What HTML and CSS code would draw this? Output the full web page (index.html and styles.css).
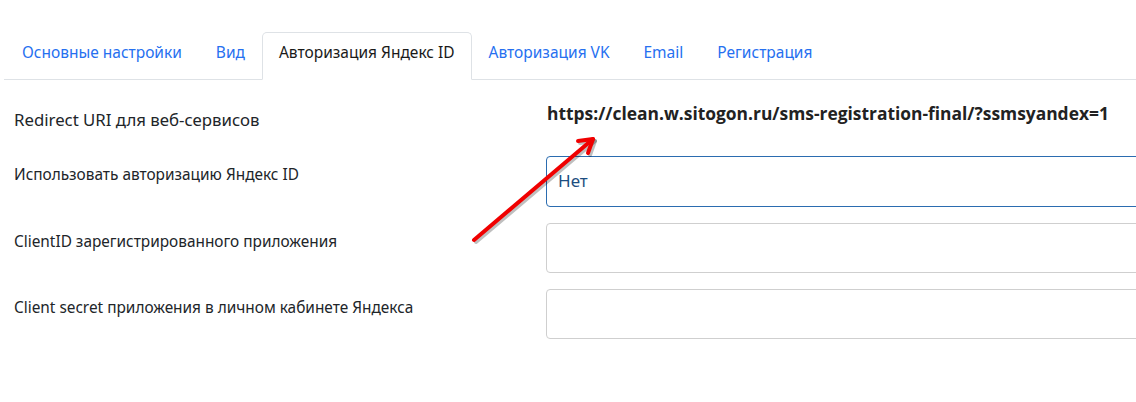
FILE: index.html
```html
<!DOCTYPE html>
<html lang="ru">
<head>
    <meta charset="UTF-8">
    <title>Настройки</title>
    <link rel="stylesheet" href="styles.css">
</head>
<body>
    <div class="abas">
        <ul class="nav">
            <li><a class="nav-link" href="#">Основные настройки</a></li>
            <li><a class="nav-link" href="#">Вид</a></li>
            <li><a class="nav-link ativo" href="#">Авторизация Яндекс ID</a></li>
            <li><a class="nav-link" href="#">Авторизация VK</a></li>
            <li><a class="nav-link" href="#">Email</a></li>
            <li><a class="nav-link" href="#">Регистрация</a></li>
        </ul>
    </div>

    <div class="formulario">
        <div class="linha linha-uri">
            <div class="rotulo rotulo-grande">Redirect URI для веб-сервисов</div>
            <div class="campo"><span class="url">https://clean.w.sitogon.ru/sms-registration-final/?ssmsyandex=1</span></div>
        </div>
        <div class="linha">
            <div class="rotulo">Использовать авторизацию Яндекс ID</div>
            <div class="campo">
                <div class="caixa caixa-foco">Нет</div>
            </div>
        </div>
        <div class="linha">
            <div class="rotulo">ClientID зарегистрированного приложения</div>
            <div class="campo"><div class="caixa"></div></div>
        </div>
        <div class="linha">
            <div class="rotulo">Client secret приложения в личном кабинете Яндекса</div>
            <div class="campo"><div class="caixa"></div></div>
        </div>

        <!-- seta vermelha por cima -->
        <svg class="seta" width="160" height="130" viewBox="460 120 160 130">
            <g fill="none" stroke-linecap="round" stroke-linejoin="round">
                <g stroke="rgba(0,0,0,0.25)" stroke-width="4" transform="translate(2,2)">
                    <path d="M474 240 L593 139"/>
                    <path d="M578 141 L593 139 L588 153"/>
                </g>
                <g stroke="#f00000" stroke-width="4">
                    <path d="M474 240 L593 139"/>
                    <path d="M578 141 L593 139 L588 153"/>
                </g>
            </g>
        </svg>
    </div>
</body>
</html>
```

FILE: styles.css
```css
*{
    margin: 0;
    padding: 0;
    box-sizing: border-box;
}
body{
    background-color: #fff;
    font-family: "Noto Sans", "Open Sans", sans-serif;
    color: #212529;
    overflow: hidden;
    width: 1136px;
    height: 402px;
}
.abas{
    padding-top: 32px;
    padding-left: 4px;
}
.nav{
    list-style: none;
    display: flex;
    padding-left: 1px;
    border-bottom: 1px solid #dee2e6;
}
.nav-link{
    display: block;
    padding: 7px 16px 15px 16px;
    font-size: 15.5px;
    line-height: 24px;
    color: #2670f0;
    text-decoration: none;
    border: 1px solid transparent;
    border-radius: 5px 5px 0 0;
    margin-bottom: -1px;
}
.nav-link.ativo{
    color: #1a1a1a;
    background-color: #fff;
    border-color: #dee2e6 #dee2e6 #fff;
}
.formulario{
    position: relative;
}
.linha{
    display: flex;
    padding-left: 14px;
    margin-bottom: 16px;
}
.rotulo{
    width: 532px;
    flex-shrink: 0;
    font-size: 15.4px;
    line-height: 22px;
    padding-top: 8px;
}
.rotulo-grande{
    font-size: 16.8px;
    padding-top: 29px;
}
.linha-uri{
    height: 76px;
    margin-bottom: 0;
}
.campo{
    width: 620px;
    flex-shrink: 0;
}
.url{
    display: block;
    padding-top: 21px;
    padding-left: 1px;
    font-family: "Open Sans", "Noto Sans", sans-serif;
    font-weight: bold;
    font-size: 17.4px;
    line-height: 24px;
    color: #222;
}
.caixa{
    height: 50px;
    border: 1px solid #cfcfcf;
    border-radius: 4px;
    padding: 12px 11px;
    font-size: 17px;
    line-height: 24px;
    color: #1d4d80;
}
.caixa-foco{
    height: 51px;
    border-color: #2b6cb0;
}
.seta{
    position: absolute;
    left: 460px;
    top: 40px;
}
```
